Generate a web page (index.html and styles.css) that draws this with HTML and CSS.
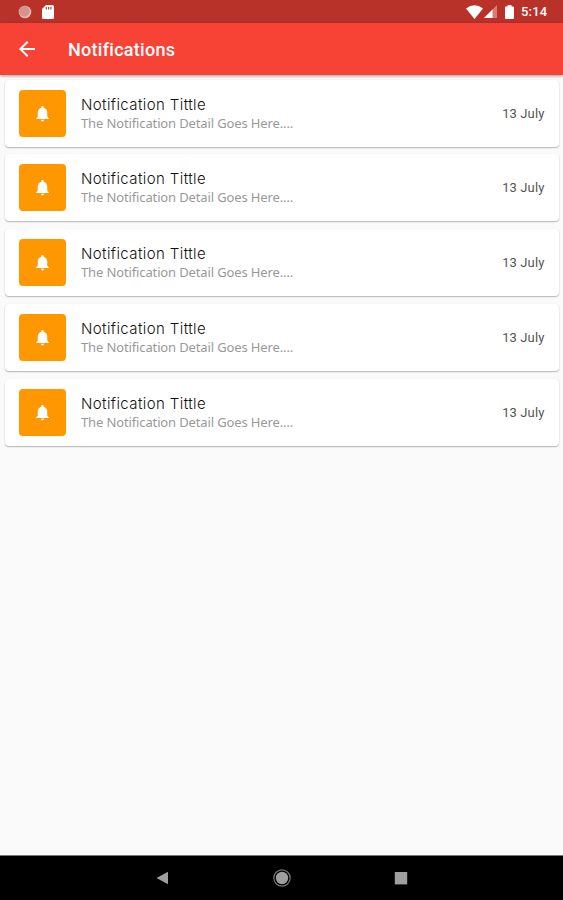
FILE: index.html
```html
<!DOCTYPE html>
<html lang="en">
<head>
<meta charset="utf-8">
<title>Notifications</title>
<link rel="stylesheet" href="styles.css">
</head>
<body>
<svg class="defs" width="0" height="0"><symbol id="bell" viewBox="0 0 24 24"><path d="M12 22c1.100 0 2-.9 2-2h-4c0 1.100.9 2 2 2zm6-6v-5c0-3.070-1.640-5.640-4.500-6.320V4c0-.83-.67-1.500-1.500-1.500s-1.500.67-1.500 1.500v.68C7.630 5.360 6 7.920 6 11v5l-2 2v1h16v-1l-2-2z"/></symbol></svg>
<div class="status">
  <svg class="dot" viewBox="0 0 14 14"><circle cx="7" cy="7" r="6.300" fill="#e2b5b0"/><circle cx="6.300" cy="6.300" r="5.200" fill="#d4948d"/></svg>
  <svg class="sd" viewBox="0 0 12 14"><path d="M4 0h6.500Q12 0 12 1.500v11Q12 14 10.500 14h-9Q0 14 0 12.500V4z" fill="#fff"/><path d="M4.300 2v2.500M6.600 2v2.500M8.900 2v2.500" stroke="#b93229" stroke-width="1.100"/></svg>
  <span class="grow"></span>
  <svg class="wifi" viewBox="0 0 17 14"><path d="M0 3.500Q8.500-3.200 17 3.500L8.500 14z" fill="#fff"/></svg>
  <svg class="signal" viewBox="0 0 13 13"><path d="M13 0v13H0z" fill="#d77c76"/><path d="M8.500 4.500V13H0z" fill="#fff"/></svg>
  <svg class="battery" viewBox="0 0 9 14"><path d="M2.500 0h4v1.500H8q1 0 1 1V13q0 1-1 1H1q-1 0-1-1V2.500q0-1 1-1h1.500z" fill="#fff"/></svg>
  <span class="clock">5:14</span>
</div>
<header class="appbar">
  <svg class="back" viewBox="4 4 16 16"><path d="M20 11H7.830l5.590-5.590L12 4l-8 8 8 8 1.410-1.410L7.830 13H20z" fill="#fff"/></svg>
  <h1>Notifications</h1>
</header>
<main class="list">
  <article class="card"><div class="tile"><svg><use href="#bell"/></svg></div><div class="text"><h2>Notification Tittle</h2><p>The Notification Detail Goes Here....</p></div><time>13 July</time></article>
  <article class="card"><div class="tile"><svg><use href="#bell"/></svg></div><div class="text"><h2>Notification Tittle</h2><p>The Notification Detail Goes Here....</p></div><time>13 July</time></article>
  <article class="card"><div class="tile"><svg><use href="#bell"/></svg></div><div class="text"><h2>Notification Tittle</h2><p>The Notification Detail Goes Here....</p></div><time>13 July</time></article>
  <article class="card"><div class="tile"><svg><use href="#bell"/></svg></div><div class="text"><h2>Notification Tittle</h2><p>The Notification Detail Goes Here....</p></div><time>13 July</time></article>
  <article class="card"><div class="tile"><svg><use href="#bell"/></svg></div><div class="text"><h2>Notification Tittle</h2><p>The Notification Detail Goes Here....</p></div><time>13 July</time></article>
</main>
<nav class="navbar">
  <svg viewBox="0 0 20 20"><path d="M4.500 10L16 3.700v12.600z" fill="#9e9e9e"/></svg>
  <svg viewBox="0 0 20 20"><circle cx="10" cy="10" r="8.200" fill="none" stroke="#777" stroke-width="1.200"/><circle cx="10" cy="10" r="6.200" fill="#9e9e9e"/></svg>
  <svg viewBox="0 0 20 20"><rect x="3.800" y="4" width="12.400" height="12.400" fill="#9e9e9e"/></svg>
</nav>
</body>
</html>
```

FILE: styles.css
```css
* { box-sizing: border-box; margin: 0; padding: 0; }
body { height: 900px; display: flex; flex-direction: column; background: #fafafa; font-family: Roboto, sans-serif; overflow: hidden; }
.defs { position: absolute; }
.status { height: 23px; flex: none; background: #b93229; display: flex; align-items: center; padding: 0 15px 0 18px; color: #fff; }
.grow { flex: 1; }
.dot { width: 14px; height: 14px; margin-right: 10px; }
.sd { width: 12px; height: 14px; }
.wifi { width: 17px; height: 14px; margin-right: 1px; }
.signal { width: 13px; height: 13px; margin-right: 8px; }
.battery { width: 9px; height: 14px; margin-right: 7px; }
.clock { font-size: 13px; font-weight: 500; line-height: 23px; width: 27px; letter-spacing: .2px; white-space: nowrap; }
.appbar { height: 52px; flex: none; background: #f74336; display: flex; align-items: center; padding-left: 19px; gap: 33px; color: #fff; box-shadow: 0 1px 3px rgba(0,0,0,.4); z-index: 1; }
.back { width: 16px; height: 16px; }
h1 { font-size: 18px; font-weight: 500; letter-spacing: .28px; }
.list { flex: 1; padding: 4.500px 3.600px 0 4.500px; display: flex; flex-direction: column; gap: 7.700px; }
.card { height: 67.100px; flex: none; display: flex; align-items: center; padding: 0 15px 0 14.500px; background: #fff; border-radius: 4px; box-shadow: 0 1px 1.500px rgba(0,0,0,.28), 0 0 1px rgba(0,0,0,.08); }
.tile { width: 47px; height: 47px; border-radius: 4px; background: #ff9800; display: flex; align-items: center; justify-content: center; }
.tile svg { width: 19px; height: 19px; fill: #fff; }
.text { flex: 1; padding: 1px 0 0 15px; }
h2 { font: 300 15px/19px Inter, sans-serif; letter-spacing: .4px; color: #111; }
p { font: 400 13px/19px "Noto Sans", sans-serif; letter-spacing: -.13px; color: #999; }
time { font-size: 13px; line-height: 16px; padding-top: 1px; color: #555; letter-spacing: .1px; }
.navbar { height: 45px; flex: none; background: #000; border-top: 1px solid #777; display: flex; align-items: center; justify-content: center; gap: 99.500px; }
.navbar svg { width: 20px; height: 20px; }
```
